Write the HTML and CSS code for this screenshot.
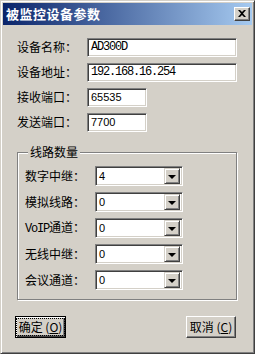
FILE: index.html
```html
<!DOCTYPE html>
<html>
<head>
<meta charset="utf-8">
<link rel="stylesheet" href="styles.css">
</head>
<body>
<div class="win">
  <div class="title">
    <span class="title-text">被监控设备参数</span>
    <span class="close"><svg width="8" height="7" viewBox="0 0 8 7"><path d="M0 0h2l2 2 2-2h2L5 3.5 8 7H6L4 5 2 7H0l3-3.5z" fill="#000"/></svg></span>
  </div>
  <div class="content">
    <div class="row"><span class="lbl">设备名称：</span><div class="edit wide mono">AD300D</div></div>
    <div class="row"><span class="lbl">设备地址：</span><div class="edit wide mono">192.168.16.254</div></div>
    <div class="row"><span class="lbl">接收端口：</span><div class="edit short sans">65535</div></div>
    <div class="row"><span class="lbl">发送端口：</span><div class="edit short sans">7700</div></div>
    <fieldset class="group">
      <legend class="legend">线路数量</legend>
      <div class="crow"><span class="lbl">数字中继：</span><div class="combo"><span class="val">4</span><span class="drop"><i class="tri"></i></span></div></div>
      <div class="crow"><span class="lbl">模拟线路：</span><div class="combo"><span class="val">0</span><span class="drop"><i class="tri"></i></span></div></div>
      <div class="crow"><span class="lbl"><span class="lat">VoIP</span>通道：</span><div class="combo"><span class="val">0</span><span class="drop"><i class="tri"></i></span></div></div>
      <div class="crow"><span class="lbl">无线中继：</span><div class="combo"><span class="val">0</span><span class="drop"><i class="tri"></i></span></div></div>
      <div class="crow"><span class="lbl">会议通道：</span><div class="combo"><span class="val">0</span><span class="drop"><i class="tri"></i></span></div></div>
    </fieldset>
    <div class="buttons">
      <div class="btn def"><span class="focus">确定 (<u>O</u>)</span></div>
      <div class="btn">取消 (<u>C</u>)</div>
    </div>
  </div>
</div>
</body>
</html>
```
FILE: styles.css
```css
* { box-sizing: border-box; }
html, body { margin: 0; padding: 0; background: #d4d0c8; }
body {
  font-family: "Noto Sans CJK SC", "Noto Sans", sans-serif;
  font-size: 12px;
  color: #000;
}
.win {
  width: 255px;
  height: 354px;
  background: #d4d0c8;
  border: 1px solid;
  border-color: #d4d0c8 #404040 #404040 #d4d0c8;
  box-shadow: inset 1px 1px #fff, inset -1px -1px #808080;
  padding: 2px;
  display: flex;
  flex-direction: column;
}
.title {
  height: 22px;
  background: linear-gradient(to right, #0a246a, #a6caf0);
  display: flex;
  align-items: center;
  justify-content: space-between;
  padding: 0 2px 0 3px;
  color: #fff;
  font-weight: bold;
  font-size: 13px;
  line-height: 14px;
  letter-spacing: 0.5px;
}
.close {
  width: 16px;
  height: 14px;
  background: #d4d0c8;
  border: 1px solid;
  border-color: #fff #404040 #404040 #fff;
  box-shadow: inset -1px -1px #808080;
  display: flex;
  align-items: center;
  justify-content: center;
  padding: 0 1px 1px 0;
}
.close svg { display: block; }
.content {
  padding: 12px 14px 0 14px;
  display: flex;
  flex-direction: column;
}
.row {
  display: flex;
  align-items: center;
  height: 20px;
  margin-bottom: 5px;
}
.lbl {
  width: 70px;
  flex: none;
  line-height: 14px;
  white-space: nowrap;
}
.lat { font-family: "Liberation Mono", monospace; font-size: 12px; letter-spacing: -1.2px; }
.edit {
  height: 19px;
  background: #fff;
  border: 1px solid;
  border-color: #808080 #fff #fff #808080;
  box-shadow: inset 1px 1px #404040, inset -1px -1px #d4d0c8;
  padding: 0 3px;
  display: flex;
  align-items: center;
  white-space: nowrap;
}
.wide { width: 150px; }
.short { width: 60px; }
.mono {
  font-family: "Liberation Mono", monospace;
  font-size: 12px;
  letter-spacing: -1.2px;
}
.sans {
  font-family: "Liberation Sans", sans-serif;
  font-size: 11px;
}
.group {
  margin: 9px 0 0 0;
  padding: 8px 0 9px 7px;
  width: 220px;
  border: 1px solid #808080;
  box-shadow: inset 1px 1px #fff, 1px 1px #fff;
  min-width: 0;
}
.legend {
  padding: 0 2px;
  margin-left: 3px;
  line-height: 12px;
  background: #d4d0c8;
}
.crow {
  display: flex;
  align-items: center;
  height: 20px;
  margin-bottom: 6px;
}
.crow:last-child { margin-bottom: 0; }
.combo {
  width: 88px;
  height: 20px;
  background: #fff;
  border: 1px solid;
  border-color: #808080 #fff #fff #808080;
  box-shadow: inset 1px 1px #404040, inset -1px -1px #d4d0c8;
  padding: 2px 2px 2px 3px;
  display: flex;
  align-items: center;
  justify-content: space-between;
  font-family: "Liberation Sans", sans-serif;
  font-size: 11px;
}
.drop {
  width: 16px;
  height: 16px;
  background: #d4d0c8;
  border: 1px solid;
  border-color: #d4d0c8 #404040 #404040 #d4d0c8;
  box-shadow: inset 1px 1px #fff, inset -1px -1px #808080;
  display: flex;
  align-items: center;
  justify-content: center;
}
.tri {
  display: block;
  width: 0;
  height: 0;
  border-left: 4px solid transparent;
  border-right: 4px solid transparent;
  border-top: 4px solid #000;
  margin-top: 1px;
}
.buttons {
  display: flex;
  justify-content: space-between;
  margin-top: 16px;
  padding: 0 2px 0 0;
  margin-left: -2px;
}
.btn {
  height: 22px;
  width: 50px;
  background: #d4d0c8;
  border: 1px solid;
  border-color: #fff #404040 #404040 #fff;
  box-shadow: inset -1px -1px #808080;
  display: flex;
  align-items: center;
  justify-content: center;
  white-space: nowrap;
  font-size: 12px;
  line-height: 14px;
}
.btn.def {
  width: 51px;
  border: 1px solid #000;
  box-shadow: inset 1px 1px #fff, inset -1px -1px #404040, inset -2px -2px #808080;
}
.focus {
  outline: 1px dotted #000;
  outline-offset: 1px;
  padding: 0 1px;
}
u { text-decoration: underline; text-underline-offset: 1px; }
```
